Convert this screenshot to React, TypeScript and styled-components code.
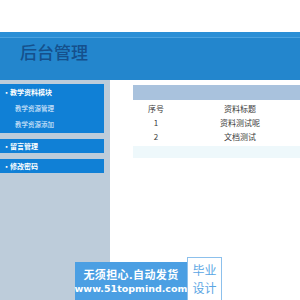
import React from "react";
import styled, { createGlobalStyle } from "styled-components";

const GlobalStyle = createGlobalStyle`
  html, body {
    margin: 0;
    padding: 0;
    height: 100%;
    background: #ffffff;
    font-family: "Noto Sans CJK SC", "Noto Sans", sans-serif;
  }
  #root {
    height: 100%;
  }
`;

const menus = [
  { title: "教学资料模块", items: ["教学资源管理", "教学资源添加"] },
  { title: "留言管理", items: [] },
  { title: "修改密码", items: [] },
];

const rows = [
  { id: "1", title: "资料测试呢" },
  { id: "2", title: "文档测试" },
];

export default function App() {
  return (
    <>
      <GlobalStyle />
      <Page>
        <TopGap />
        <Header>
          <Title>后台管理</Title>
        </Header>
        <Body>
          <Sidebar>
            {menus.map((m) => (
              <MenuBox key={m.title} $open={m.items.length > 0}>
                <MenuTitle $open={m.items.length > 0}>·{m.title}</MenuTitle>
                {m.items.map((i) => (
                  <MenuItem key={i}>{i}</MenuItem>
                ))}
              </MenuBox>
            ))}
          </Sidebar>
          <Content>
            <Table>
              <HeadBar />
              <Row>
                <IdCell>序号</IdCell>
                <TitleCell>资料标题</TitleCell>
              </Row>
              {rows.map((r) => (
                <Row key={r.id}>
                  <IdCell>{r.id}</IdCell>
                  <TitleCell>{r.title}</TitleCell>
                </Row>
              ))}
              <FootBar />
            </Table>
          </Content>
        </Body>
        <Watermark>
          <MarkBlue>
            <MarkLine>无须担心.自动发货</MarkLine>
            <MarkUrl>www.51topmind.com</MarkUrl>
          </MarkBlue>
          <MarkWhite>
            <span>毕业</span>
            <span>设计</span>
          </MarkWhite>
        </Watermark>
      </Page>
    </>
  );
}

const Page = styled.div`
  position: relative;
  height: 100%;
  display: flex;
  flex-direction: column;
  overflow: hidden;
`;

const TopGap = styled.div`
  height: 32px;
  flex-shrink: 0;
`;

const Header = styled.div`
  height: 43px;
  flex-shrink: 0;
  background: #2386cd;
  border-top: 5px solid #2b8fd6;
  box-shadow: inset 0 1px 0 #4aa2e0;
  display: flex;
  align-items: center;
  padding-left: 20px;
`;

const Title = styled.div`
  font-size: 17px;
  color: #15508c;
  font-weight: 500;
  margin-top: -14px;
`;

const Body = styled.div`
  flex: 1;
  display: flex;
`;

const Sidebar = styled.div`
  width: 110px;
  flex-shrink: 0;
  background: #bdccda;
  padding-top: 4px;
  display: flex;
  flex-direction: column;
  gap: 6px;
`;

const MenuBox = styled.div<{ $open: boolean }>`
  width: 104px;
  background: #1080d6;
  display: flex;
  flex-direction: column;
  padding-bottom: ${({ $open }) => ($open ? "1px" : "0")};
`;

const MenuTitle = styled.div<{ $open: boolean }>`
  height: ${({ $open }) => ($open ? "16px" : "14px")};
  line-height: ${({ $open }) => ($open ? "16px" : "14px")};
  padding-left: 3px;
  font-size: 7px;
  color: #ffffff;
  font-weight: 700;
`;

const MenuItem = styled.div`
  height: 16px;
  line-height: 16px;
  padding-left: 15px;
  font-size: 6.5px;
  color: #e6f2ff;
`;

const Content = styled.div`
  flex: 1;
  background: #ffffff;
  padding: 5px 0 0 23px;
  overflow: hidden;
`;

const Table = styled.div`
  width: 240px;
  display: flex;
  flex-direction: column;
`;

const HeadBar = styled.div`
  height: 15px;
  background: #a9c2dd;
  margin-bottom: 1px;
`;

const Row = styled.div`
  height: 14px;
  display: flex;
  align-items: center;
  font-size: 8px;
  color: #3a3a3a;
`;

const IdCell = styled.div`
  width: 46px;
  text-align: center;
`;

const TitleCell = styled.div`
  width: 122px;
  text-align: center;
`;

const FootBar = styled.div`
  height: 12px;
  margin-top: 3px;
  background: #eef8fb;
`;

const Watermark = styled.div`
  position: absolute;
  left: 75px;
  bottom: 0;
  display: flex;
  align-items: flex-end;
`;

const MarkBlue = styled.div`
  width: 112px;
  height: 38px;
  background: #4b9fe3;
  display: flex;
  flex-direction: column;
  align-items: center;
  justify-content: center;
  gap: 3px;
  color: #ffffff;
  font-weight: 700;
`;

const MarkLine = styled.div`
  font-size: 11px;
  line-height: 12px;
  letter-spacing: 0.4px;
`;

const MarkUrl = styled.div`
  font-family: "DejaVu Sans", sans-serif;
  font-size: 9.5px;
  line-height: 11px;
`;

const MarkWhite = styled.div`
  width: 33px;
  height: 42px;
  background: #ffffff;
  border: 1px solid #8cc0ec;
  border-bottom: none;
  display: flex;
  flex-direction: column;
  align-items: center;
  justify-content: center;
  gap: 6px;
  color: #5aa6e4;
  font-size: 12px;
  line-height: 12px;
`;
